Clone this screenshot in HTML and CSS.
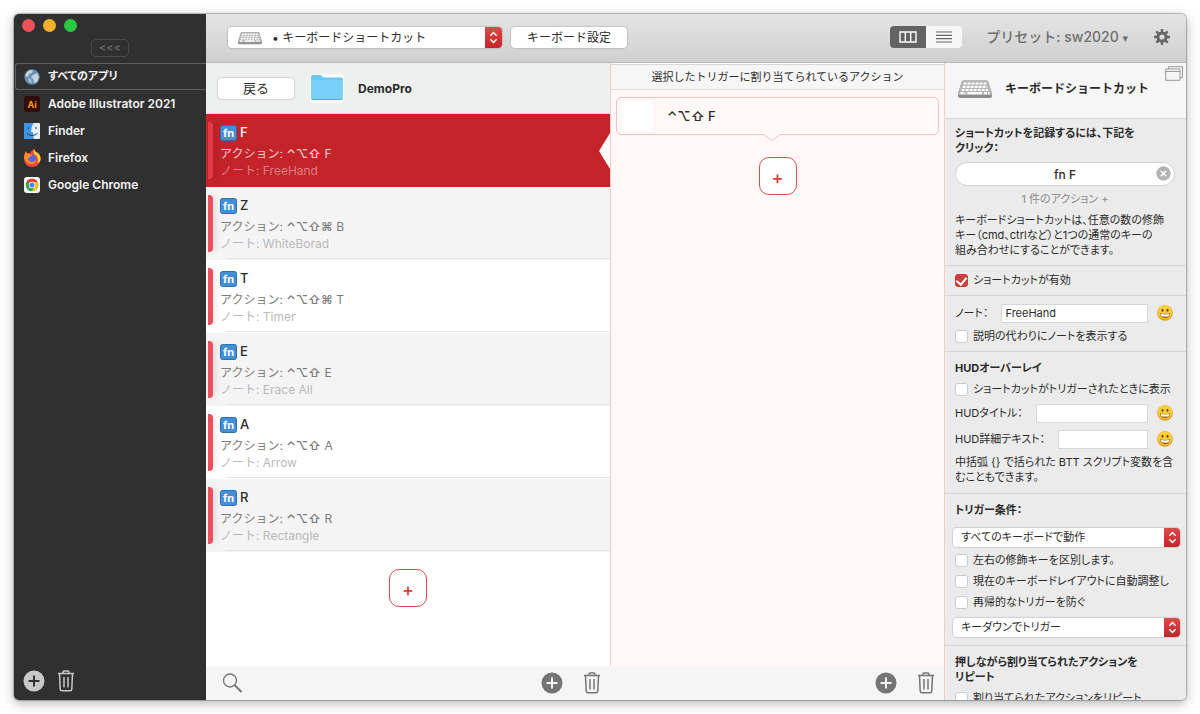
FILE: index.html
```
<!DOCTYPE html>
<html lang="ja">
<head>
  <meta charset="UTF-8">
  <title>キーボードショートカット</title>
  <link rel="stylesheet" href="styles.css">
</head>
<body>
  <svg class="defs" aria-hidden="true">
    <symbol id="icon-plus" viewBox="0 0 22 22">
      <circle cx="11" cy="11" r="10.5" fill="currentColor"/>
      <path d="M11 5.500v11M5.500 11h11" stroke="var(--plus)" stroke-width="2"/>
    </symbol>
    <symbol id="icon-trash" viewBox="0 0 18 22">
      <path d="M1 3.500h16M6 3.200V2.200Q6 1 7.200 1h3.600Q12 1 12 2.200v1M2.500 4l.7 15q.1 1.800 1.800 1.800h8q1.700 0 1.800-1.800l.7-15M7 7v10.500M11 7v10.500" fill="none" stroke="currentColor" stroke-width="1.500"/>
    </symbol>
    <symbol id="icon-keyboard" viewBox="0 0 36 20">
      <path d="M6.500 1.500h23q1.300 0 1.700 1.200L35 14.500v2.500q0 2-2 2H3q-2 0-2-2v-2.500L4.800 2.700q.4-1.200 1.700-1.200z" fill="#8e8e8e"/>
      <path d="M6.500 1.500h23q1.300 0 1.700 1.200L35 14.500q.2 1.500-1.500 1.500h-31Q.8 16 1 14.500L4.800 2.700q.4-1.200 1.700-1.200z" fill="#b4b4b4"/>
      <path d="M6.500 4.500h23M5.600 7.800h24.800M4.700 11h26.600M3.500 14.200h5M27 14.200h5.500" stroke="#fff" stroke-width="2.200" stroke-dasharray="3 1"/>
      <path d="M10.500 14.200h14.500" stroke="#fff" stroke-width="2.200"/>
    </symbol>
    <symbol id="icon-steps" viewBox="0 0 10 14">
      <path d="M1.500 5L5 1.500 8.500 5M1.500 9L5 12.500 8.500 9" fill="none" stroke="#fff" stroke-width="1.600"/>
    </symbol>
    <symbol id="icon-smile" viewBox="0 0 16 16">
      <circle cx="8" cy="8" r="7.800" fill="#e59a22"/>
      <circle cx="8" cy="7.200" r="7" fill="#fcd035"/>
      <ellipse cx="5.500" cy="5.200" rx="1" ry="1.500" fill="#6b4a12"/>
      <ellipse cx="10.500" cy="5.200" rx="1" ry="1.500" fill="#6b4a12"/>
      <path d="M2.800 8.300q5.200 1.200 10.400 0-.2 4.900-5.200 4.900T2.800 8.300z" fill="#9c6420"/>
      <path d="M3.600 9.100q4.400.8 8.800 0-.4 2.400-1.400 2.400H5q-1 0-1.400-2.400z" fill="#fff"/>
    </symbol>
    <symbol id="icon-fn" viewBox="0 0 17 16">
      <rect x=".5" y=".5" width="16" height="15" rx="2" fill="#4390d8" stroke="#2c6faf"/>
      <text x="8.500" y="12" text-anchor="middle" font-size="11" font-weight="700" fill="#fff">fn</text>
    </symbol>
  </svg>

  <div class="window">
    <aside class="sidebar">
      <div class="lights"><span class="light red"></span><span class="light yellow"></span><span class="light green"></span></div>
      <button class="collapse">&lt;&lt;&lt;</button>
      <ul class="apps">
        <li class="app selected">
          <svg class="app-icon" viewBox="0 0 16 16"><circle cx="8" cy="8" r="7.700" fill="#668fb5"/><path d="M3 3q3-3 6-1.500L8 4 5 5 4 8 1 7zM9 6l4-2 2 4-2 5-3 1-1-4-2-2z" fill="#c3d3dc"/><path d="M4 9l3 1 1 4-3-1z" fill="#a9c0cf"/></svg>
          すべてのアプリ
        </li>
        <li class="app">
          <svg class="app-icon" viewBox="0 0 16 16"><rect width="16" height="16" rx="3" fill="#310b05"/><text x="8" y="11.500" text-anchor="middle" font-size="9" font-weight="700" fill="#ff9a00">Ai</text></svg>
          Adobe Illustrator 2021
        </li>
        <li class="app">
          <svg class="app-icon" viewBox="0 0 16 16"><rect width="16" height="16" rx="1" fill="#e4eef7"/><path d="M0 0h9.500Q7 4 7 9h2q0 4 .8 7H0z" fill="#3b96e8"/><path d="M4.300 4v2M12 4v2M3 10.500q5 4 10.500 0" fill="none" stroke="#24405f"/></svg>
          Finder
        </li>
        <li class="app">
          <svg class="app-icon wide" viewBox="0 0 18 18"><path d="M1 7q0-3 2-5l1 2 3 0Q8 2 11 0q1 3 4 4 3 3 2.500 7Q16 18 9 18 1 17.500 1 9z" fill="#f4473f"/><path d="M11 0q1 3 4 4 3 3 2.500 7-1 3-3 3Q16 7 11 5q-1-3 0-5z" fill="#ffcf33"/><circle cx="9" cy="9.500" r="4" fill="#5967d6"/><path d="M1 8l2-5 2 2 4 1-2 2-2 1q0 4 4 4 3 0 4-2 0 4-5 4-6-1-7-7z" fill="#ff9125"/></svg>
          Firefox
        </li>
        <li class="app">
          <svg class="app-icon" viewBox="0 0 16 16"><rect width="16" height="16" rx="3" fill="#f7f7f7"/><circle cx="8" cy="8" r="6.300" fill="#34a353"/><path d="M8 8L2.500 4.900A6.300 6.300 0 0 1 13.500 4.900H8z" fill="#e4402f"/><path d="M8 14.300A6.300 6.300 0 0 0 13.500 4.900H8L10.700 9.500z" fill="#fbc116"/><circle cx="8" cy="8" r="3.200" fill="#fff"/><circle cx="8" cy="8" r="2.500" fill="#4384f0"/></svg>
          Google Chrome
        </li>
      </ul>
      <div class="sidebar-foot">
        <button class="icon-btn" aria-label="追加"><svg class="plus-icon"><use href="#icon-plus"/></svg></button>
        <button class="icon-btn" aria-label="削除"><svg class="trash-icon"><use href="#icon-trash"/></svg></button>
      </div>
    </aside>

    <div class="main">
      <header class="toolbar">
        <div class="picker device">
          <svg class="device-icon"><use href="#icon-keyboard"/></svg>
          <select aria-label="デバイス"><option>• キーボードショートカット</option></select>
          <span class="steps"><svg><use href="#icon-steps"/></svg></span>
        </div>
        <button class="btn settings">キーボード設定</button>
        <div class="segment">
          <button class="on" aria-label="カラム"><svg width="18" height="12" viewBox="0 0 18 12"><path d="M1 1h16v10H1zM6.300 1v10M11.700 1v10" fill="none" stroke="#fff" stroke-width="1.400"/></svg></button>
          <button aria-label="リスト"><svg width="16" height="12" viewBox="0 0 16 12"><path d="M0 1h16M0 4.300h16M0 7.700h16M0 11h16" stroke="#666" stroke-width="1.200"/></svg></button>
        </div>
        <button class="preset">プリセット: sw2020 <span class="caret">▾</span></button>
        <button class="icon-btn gear" aria-label="設定">
          <svg width="16" height="16" viewBox="0 0 16 16"><circle cx="8" cy="8" r="4.100" fill="none" stroke="#666" stroke-width="3"/><path d="M8 0v3.500M8 12.500V16M0 8h3.500M12.500 8H16M2.300 2.300l2.500 2.500M11.200 11.200l2.500 2.500M2.300 13.700l2.500-2.500M11.200 4.800l2.500-2.500" stroke="#666" stroke-width="2.400"/></svg>
        </button>
      </header>

      <div class="panes">
        <section class="triggers">
          <div class="group-head">
            <button class="btn back">戻る</button>
            <svg class="folder" viewBox="0 0 34 29"><rect width="34" height="29" rx="4" fill="#fafcfc"/><path d="M1 3q0-2 2-2h7q1 0 2 1l1.500 1.500H31q2 0 2 2V24q0 2-2 2H3q-2 0-2-2z" fill="#69c9f6"/><path d="M1 6h32v18q0 2-2 2H3q-2 0-2-2z" fill="#78d0fa"/><path d="M2 25.500h30" stroke="#50aedb"/></svg>
            <strong>DemoPro</strong>
          </div>
          <ul class="rows">
            <li class="row selected">
              <div class="key"><svg class="fn"><use href="#icon-fn"/></svg>F</div>
              <div class="act">アクション: <b>⌃⌥⇧</b> F</div>
              <div class="note">ノート: FreeHand</div>
            </li>
            <li class="row">
              <div class="key"><svg class="fn"><use href="#icon-fn"/></svg>Z</div>
              <div class="act">アクション: <b>⌃⌥⇧⌘</b> B</div>
              <div class="note">ノート: WhiteBorad</div>
            </li>
            <li class="row">
              <div class="key"><svg class="fn"><use href="#icon-fn"/></svg>T</div>
              <div class="act">アクション: <b>⌃⌥⇧⌘</b> T</div>
              <div class="note">ノート: Timer</div>
            </li>
            <li class="row">
              <div class="key"><svg class="fn"><use href="#icon-fn"/></svg>E</div>
              <div class="act">アクション: <b>⌃⌥⇧</b> E</div>
              <div class="note">ノート: Erace All</div>
            </li>
            <li class="row">
              <div class="key"><svg class="fn"><use href="#icon-fn"/></svg>A</div>
              <div class="act">アクション: <b>⌃⌥⇧</b> A</div>
              <div class="note">ノート: Arrow</div>
            </li>
            <li class="row">
              <div class="key"><svg class="fn"><use href="#icon-fn"/></svg>R</div>
              <div class="act">アクション: <b>⌃⌥⇧</b> R</div>
              <div class="note">ノート: Rectangle</div>
            </li>
          </ul>
          <button class="add">+</button>
          <div class="pane-foot">
            <button class="icon-btn search" aria-label="検索"><svg width="21" height="20" viewBox="0 0 21 20"><circle cx="8" cy="7.500" r="6.500" fill="none" stroke="#777" stroke-width="1.400"/><path d="M12.500 12l7 7" stroke="#777" stroke-width="2"/></svg></button>
            <button class="icon-btn" aria-label="追加"><svg class="plus-icon"><use href="#icon-plus"/></svg></button>
            <button class="icon-btn" aria-label="削除"><svg class="trash-icon"><use href="#icon-trash"/></svg></button>
          </div>
        </section>

        <section class="actions">
          <div class="actions-body">
            <h2 class="actions-title">選択したトリガーに割り当てられているアクション</h2>
            <div class="card">
              <span class="thumb"></span>
              <span><b>⌃⌥⇧</b> F</span>
              <svg class="notch" viewBox="0 0 18 8"><path d="M0 0L9 6.500 18 0" fill="#fff8f7" stroke="#f6bfc1"/></svg>
            </div>
            <button class="add">+</button>
          </div>
          <div class="pane-foot">
            <button class="icon-btn" aria-label="追加"><svg class="plus-icon"><use href="#icon-plus"/></svg></button>
            <button class="icon-btn" aria-label="削除"><svg class="trash-icon"><use href="#icon-trash"/></svg></button>
          </div>
        </section>

        <section class="inspector">
          <div class="inspector-head">
            <svg class="kb"><use href="#icon-keyboard"/></svg>
            <h1>キーボードショートカット</h1>
            <svg class="detach" viewBox="0 0 18 15"><path d="M3.500 3V.7h14v11H15M.7 3h14.300v11.300H.7zM.7 5.500H15" fill="none" stroke="#999"/></svg>
          </div>
          <div class="group">
            <h3>ショートカットを記録するには、下記を<br>クリック：</h3>
            <div class="recorder">
              <input type="text" value="fn F" aria-label="ショートカット">
              <button class="icon-btn clear" aria-label="消去"><svg width="15" height="15" viewBox="0 0 15 15"><circle cx="7.500" cy="7.500" r="7.200" fill="#b3b3b3"/><path d="M4.700 4.700l5.600 5.600M10.300 4.700l-5.600 5.600" stroke="#fff" stroke-width="1.500"/></svg></button>
            </div>
            <button class="count">1 件のアクション +</button>
            <p>キーボードショートカットは、任意の数の修飾<br>キー（cmd、ctrlなど）と1つの通常のキーの<br>組み合わせにすることができます。</p>
          </div>
          <div class="group">
            <label class="check"><input type="checkbox" checked><span>ショートカットが有効</span></label>
          </div>
          <div class="group">
            <div class="field"><label for="note">ノート：</label><input type="text" id="note" value="FreeHand"><button class="icon-btn" aria-label="絵文字"><svg class="smile"><use href="#icon-smile"/></svg></button></div>
            <label class="check"><input type="checkbox"><span>説明の代わりにノートを表示する</span></label>
          </div>
          <div class="group titled">
            <h3>HUDオーバーレイ</h3>
            <label class="check"><input type="checkbox"><span>ショートカットがトリガーされたときに表示</span></label>
            <div class="field"><label for="hud-title">HUDタイトル：</label><input type="text" id="hud-title"><button class="icon-btn" aria-label="絵文字"><svg class="smile"><use href="#icon-smile"/></svg></button></div>
            <div class="field"><label for="hud-text">HUD詳細テキスト：</label><input type="text" id="hud-text"><button class="icon-btn" aria-label="絵文字"><svg class="smile"><use href="#icon-smile"/></svg></button></div>
            <p>中括弧 {} で括られた BTT スクリプト変数を含<br>むこともできます。</p>
          </div>
          <div class="group titled">
            <h3>トリガー条件：</h3>
            <div class="picker">
              <select aria-label="キーボード"><option>すべてのキーボードで動作</option></select>
              <span class="steps"><svg><use href="#icon-steps"/></svg></span>
            </div>
            <label class="check"><input type="checkbox"><span>左右の修飾キーを区別します。</span></label>
            <label class="check"><input type="checkbox"><span>現在のキーボードレイアウトに自動調整し</span></label>
            <label class="check"><input type="checkbox"><span>再帰的なトリガーを防ぐ</span></label>
            <div class="picker">
              <select aria-label="タイミング"><option>キーダウンでトリガー</option></select>
              <span class="steps"><svg><use href="#icon-steps"/></svg></span>
            </div>
          </div>
          <div class="group titled">
            <h3>押しながら割り当てられたアクションを<br>リピート</h3>
            <label class="check"><input type="checkbox"><span>割り当てられたアクションをリピート</span></label>
          </div>
        </section>
      </div>
    </div>
  </div>
</body>
</html>
```

FILE: styles.css
```
* {
  box-sizing: border-box;
}
body {
  margin: 0;
  padding: 14px;
  height: 100vh;
  background: #fff;
  color: #2b2b2b;
  font-family: Inter, "Noto Sans CJK JP", sans-serif;
  font-size: 11px;
  line-height: 15px;
}
ul, h1, h2, h3, p {
  margin: 0;
  padding: 0;
  list-style: none;
}
button, input, select {
  margin: 0;
  border: 0;
  padding: 0;
  color: inherit;
  font: inherit;
  font-feature-settings: inherit;
}
b {
  font-weight: 600;
}
svg {
  display: block;
}
.defs {
  position: absolute;
  width: 0;
  height: 0;
}
.window {
  display: flex;
  height: 100%;
  overflow: hidden;
  border-radius: 5px;
  box-shadow: 0 0 1px 1px rgba(0, 0, 0, 0.25), 0 3px 12px rgba(0, 0, 0, 0.3);
}
.icon-btn {
  flex: none;
  background: none;
}
.plus-icon {
  width: 22px;
  height: 22px;
}
.trash-icon {
  width: 18px;
  height: 22px;
}

/* sidebar */
.sidebar {
  display: flex;
  flex-direction: column;
  flex: none;
  width: 192px;
  padding-top: 5px;
  background: #303030;
  color: #f2f2f2;
}
.lights {
  display: flex;
  gap: 8px;
  padding-left: 8px;
}
.light {
  width: 13px;
  height: 13px;
  border-radius: 50%;
}
.red { background: #ec5359; }
.yellow { background: #f3b02f; }
.green { background: #27ca40; }
.collapse {
  align-self: center;
  width: 38px;
  height: 18px;
  margin: 7px 0 6px;
  border: 1px solid #4b4b4b;
  border-radius: 5px;
  background: none;
  color: #777;
}
.app {
  display: flex;
  align-items: center;
  gap: 8px;
  height: 27px;
  padding-left: 10px;
  font-size: 12px;
  font-weight: 600;
}
.app.selected {
  margin-left: 1px;
  padding-left: 8px;
  border: 1px solid #5e5e5e;
  border-right: 0;
  border-radius: 3px 0 0 3px;
  font-size: 11px;
  font-feature-settings: "palt";
}
.app-icon {
  width: 16px;
  height: 16px;
}
.app-icon.wide {
  width: 18px;
  height: 18px;
  margin: 0 -1px;
}
.sidebar-foot {
  --plus: #303030;
  display: flex;
  gap: 12px;
  margin-top: auto;
  padding: 0 0 8px 9px;
  color: #c8c8c8;
}

/* toolbar */
.main {
  display: flex;
  flex-direction: column;
  flex: 1;
  min-width: 0;
}
.toolbar {
  display: flex;
  align-items: center;
  flex: none;
  height: 49px;
  padding: 0 16px 2px 22px;
  border-bottom: 1px solid #b9b9b9;
  background: linear-gradient(#e5e5e5, #cfcfcf);
}
.btn {
  height: 21px;
  border-radius: 4px;
  background: #fff;
  box-shadow: 0 0 1px 1px rgba(0, 0, 0, 0.12);
  font-size: 12px;
}
.settings {
  width: 116px;
  margin-left: 9px;
}
.picker {
  position: relative;
}
.picker select {
  display: block;
  width: 100%;
  height: 19px;
  padding: 0 20px 0 8px;
  border-radius: 4px;
  background: #fff;
  box-shadow: 0 0 1px 1px rgba(0, 0, 0, 0.12);
  appearance: none;
}
.steps {
  position: absolute;
  top: 0;
  right: 0;
  bottom: 0;
  display: grid;
  place-items: center;
  width: 16px;
  border-radius: 0 4px 4px 0;
  background: linear-gradient(#dc4a4a, #c5242a);
  pointer-events: none;
}
.steps svg {
  width: 9px;
  height: 13px;
}
.picker.device {
  width: 274px;
}
.device select {
  height: 21px;
  padding-left: 44px;
  font-size: 12px;
}
.device .steps {
  width: 17px;
}
.device-icon {
  position: absolute;
  top: 4px;
  left: 9px;
  width: 26px;
  height: 14px;
}
.segment {
  display: flex;
  margin-left: auto;
  border-radius: 4px;
  overflow: hidden;
}
.segment button {
  display: grid;
  place-items: center;
  width: 36px;
  height: 22px;
  background: #f7f7f7;
}
.segment .on {
  background: #636363;
}
.preset {
  margin-left: 24px;
  background: none;
  color: #6f6f6f;
  font-size: 14px;
  font-weight: 500;
}
.caret {
  font-family: "DejaVu Sans", sans-serif;
  font-size: 11px;
}
.gear {
  margin-left: 26px;
}

/* panes */
.panes {
  display: grid;
  grid-template-columns: 404fr 334fr 242px;
  flex: 1;
  min-height: 0;
}
.triggers, .actions {
  display: flex;
  flex-direction: column;
  min-width: 0;
  background: #fff;
}
.group-head {
  display: flex;
  align-items: center;
  height: 51px;
  padding-left: 12px;
  border-bottom: 1px solid #d9dbdb;
  background: #eef0f0;
  font-size: 12px;
}
.group-head strong {
  margin-left: 14px;
}
.back {
  width: 76px;
  font-size: 13px;
}
.folder {
  width: 34px;
  height: 29px;
  margin-left: 16px;
}
.row {
  position: relative;
  height: 73px;
  padding: 10px 0 8px 14px;
  font-size: 12px;
  line-height: 17px;
}
.row:nth-child(even) {
  background: #f4f4f4;
}
.row::before {
  content: "";
  position: absolute;
  top: 8px;
  bottom: 8px;
  left: 2px;
  width: 5px;
  border-radius: 0 4px 4px 0;
  background: #ee4f5b;
  box-shadow: 2px 0 6px rgba(0, 0, 0, 0.12);
}
.row::after {
  content: "";
  position: absolute;
  right: 0;
  bottom: 1px;
  left: 20px;
  height: 1px;
  background: #e5e5e5;
}
.key {
  display: flex;
  align-items: center;
  gap: 3px;
  margin-bottom: 4px;
  font-size: 13px;
  font-weight: 500;
}
.fn {
  width: 17px;
  height: 16px;
}
.act {
  color: #7c7c7c;
}
.note {
  color: #b9b9b9;
}
.row.selected {
  background: #c32329;
}
.row.selected::before {
  background: #e33a44;
}
.selected .key {
  color: #fff;
}
.selected .act {
  color: #f6c9ca;
}
.selected .note {
  color: #dc7f83;
}
/* pointer towards the actions column */
.row.selected::after {
  top: 19px;
  left: auto;
  width: 11px;
  height: 36px;
  background: #fff8f7;
  clip-path: polygon(100% 0, 0 50%, 100% 100%);
}
.add {
  align-self: center;
  flex: none;
  width: 38px;
  height: 38px;
  margin-top: 17px;
  padding-top: 2px;
  border: 1px solid #df4a4f;
  border-radius: 10px;
  background: #fff;
  color: #df3a40;
  font-size: 18px;
  font-weight: 500;
}
.pane-foot {
  --plus: #f5f5f5;
  display: flex;
  align-items: center;
  justify-content: flex-end;
  gap: 20px;
  flex: none;
  height: 34px;
  margin-top: auto;
  padding-right: 9px;
  background: #f5f5f5;
  color: #757575;
}
.search {
  margin: 0 auto 0 16px;
}
.actions-body {
  display: flex;
  flex-direction: column;
  flex: 1;
  border-left: 1px solid #f9c8c9;
  background: #fff8f7;
}
.actions-title {
  margin-top: 1px;
  border: solid #d8d8d8;
  border-width: 1px 0;
  background: #f6f6f6;
  font-size: 11px;
  font-weight: 400;
  line-height: 24px;
  text-align: center;
}
.card {
  position: relative;
  display: flex;
  align-items: center;
  gap: 14px;
  height: 38px;
  margin: 7px 5px 5px;
  padding-left: 4px;
  border: 1px solid #f6bfc1;
  border-radius: 5px;
  font-size: 13px;
  font-weight: 500;
}
.thumb {
  width: 32px;
  height: 30px;
  border-radius: 4px;
  background: #fff;
}
.notch {
  position: absolute;
  top: 36px;
  left: 146px;
  width: 18px;
  height: 8px;
}

/* inspector */
.inspector {
  min-width: 0;
  border-left: 1px solid #f9c8c9;
  overflow: hidden;
  background: #ebebeb;
  white-space: nowrap;
  font-feature-settings: "palt";
}
.inspector-head {
  position: relative;
  display: flex;
  align-items: center;
  gap: 12px;
  height: 55px;
  padding: 0 0 4px 12px;
  background: #f6f6f6;
}
.inspector-head h1 {
  font-size: 12px;
  font-feature-settings: normal;
}
.kb {
  width: 36px;
  height: 20px;
}
.detach {
  position: absolute;
  top: 3px;
  right: 3px;
  width: 18px;
  height: 15px;
}
.group {
  display: flex;
  flex-direction: column;
  gap: 6px;
  padding: 7px 11px 7px 10px;
  border-top: 1px solid #d4d4d4;
}
.group.titled {
  padding: 9px 11px 8px 10px;
}
.group h3 {
  font-size: 11px;
  font-weight: 700;
}
.recorder {
  position: relative;
}
.recorder input {
  display: block;
  width: 100%;
  height: 24px;
  padding: 0 16px;
  border: 1px solid #d2d2d2;
  border-radius: 12px;
  background: #fff;
  font-size: 12px;
  font-weight: 500;
  text-align: center;
}
.clear {
  position: absolute;
  top: 4px;
  right: 4px;
}
.count {
  background: none;
  color: #8a8a8a;
}
.check {
  display: flex;
  align-items: center;
  gap: 5px;
  height: 15px;
}
.check span {
  overflow: hidden;
}
.check input {
  display: grid;
  place-items: center;
  flex: none;
  width: 13px;
  height: 13px;
  border: 1px solid #cbcbcb;
  border-radius: 3px;
  background: #fff;
  appearance: none;
}
.check input:checked {
  border-color: #c9383b;
  background: #cf3f42;
}
.check input:checked::before {
  content: "";
  width: 5px;
  height: 8px;
  margin-bottom: 2px;
  border: solid #fff;
  border-width: 0 2px 2px 0;
  transform: rotate(40deg);
}
.field {
  display: flex;
  align-items: center;
  height: 20px;
  padding-right: 2px;
}
.field input {
  flex: 1;
  min-width: 0;
  height: 19px;
  margin: 0 9px 0 13px;
  padding: 0 3px;
  border: 1px solid #d6d6d6;
  background: #fff;
}
.smile {
  width: 16px;
  height: 16px;
}
.group .picker {
  margin: 2px -5px 0 -2px;
}
.group h3 + .picker {
  margin-top: 4px;
}
```
